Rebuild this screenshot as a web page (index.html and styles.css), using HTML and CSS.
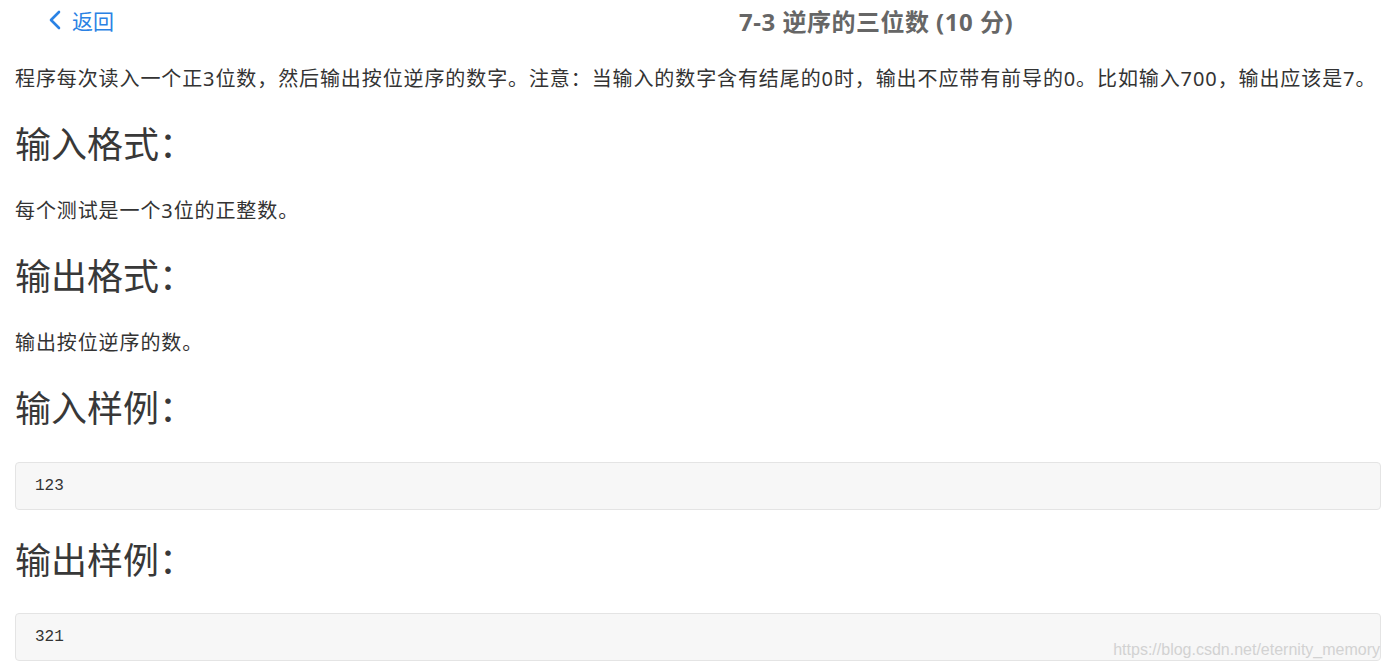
FILE: index.html
```html
<!DOCTYPE html>
<html lang="zh-CN">
<head>
    <meta charset="UTF-8">
    <meta name="viewport" content="width=device-width, initial-scale=1.0">
    <title>7-3 逆序的三位数</title>
    <link rel="stylesheet" href="styles.css">
</head>
<body>
    <header class="top-bar">
        <a class="back-link" href="#">
            <svg class="back-icon" width="13" height="20" viewBox="0 0 13 20">
                <path d="M11 2 L3 10 L11 18" fill="none" stroke="#2a82e4" stroke-width="2.6" stroke-linecap="round" stroke-linejoin="round"/>
            </svg>
            <span>返回</span>
        </a>
        <h1 class="problem-title">7-3 逆序的三位数 (10 分)</h1>
    </header>

    <main class="problem">
        <p class="intro">程序每次读入一个正3位数，然后输出按位逆序的数字。注意：当输入的数字含有结尾的0时，输出不应带有前导的0。比如输入700，输出应该是7。</p>

        <h2>输入格式：</h2>
        <p>每个测试是一个3位的正整数。</p>

        <h2>输出格式：</h2>
        <p>输出按位逆序的数。</p>

        <h2>输入样例：</h2>
        <pre class="sample">123</pre>

        <h2>输出样例：</h2>
        <pre class="sample sample-last">321<span class="watermark">https://blog.csdn.net/eternity_memory</span></pre>
    </main>
</body>
</html>
```

FILE: styles.css
```css
/* Kiểu chung */
body {
    margin: 0;
    font-family: "Noto Sans", "Noto Sans CJK SC", sans-serif;
    color: #333;
    background: #fff;
}

/* Thanh trên cùng */
.top-bar {
    display: flex;
    align-items: center;
    height: 40px;
    padding-left: 48px;
}

.back-link {
    display: flex;
    align-items: center;
    gap: 11px;
    color: #2a82e4;
    text-decoration: none;
    font-size: 21px;
}

.back-icon {
    display: block;
}

.problem-title {
    margin: 0 0 0 625px;
    font-size: 24px;
    letter-spacing: 0.5px;
    font-weight: bold;
    color: #666;
}

/* Nội dung đề bài */
.problem {
    display: flex;
    flex-direction: column;
    gap: 28px;
    padding: 24px 9px 0 15px;
}

.problem p {
    margin: 0;
    font-size: 20px;
    letter-spacing: 0.9px;
    line-height: 30px;
    color: #333;
}

.problem .intro {
    white-space: nowrap;
}

.problem h2 {
    margin: 0;
    font-size: 36px;
    font-weight: normal;
    line-height: 46px;
    color: #383838;
}

.sample {
    position: relative;
    margin: 2px 0 0;
    height: 46px;
    padding: 0 19px;
    line-height: 46px;
    font-family: "Liberation Mono", monospace;
    font-size: 16px;
    color: #333;
    background: #f7f7f7;
    border: 1px solid #e4e4e4;
    border-radius: 4px;
}

.sample-last {
    margin-top: 1px;
}

.watermark {
    position: absolute;
    right: 0;
    bottom: 0;
    line-height: 20px;
    font-family: "Liberation Sans", sans-serif;
    font-size: 16px;
    letter-spacing: 0;
    color: #d2d2d2;
}
```
